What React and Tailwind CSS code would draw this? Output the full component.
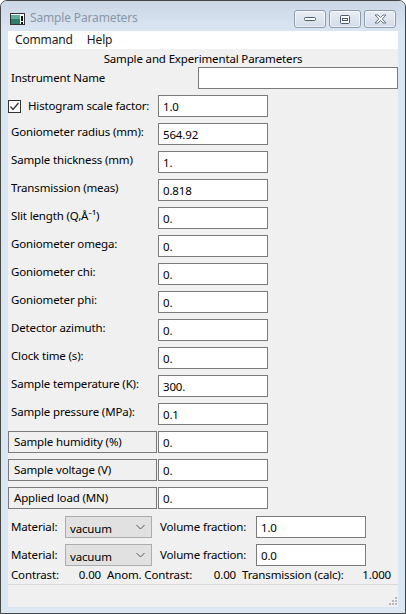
import React from "react";

const simpleRows = [
  ["Goniometer radius (mm):", "564.92"],
  ["Sample thickness (mm)", "1."],
  ["Transmission (meas)", "0.818"],
  ["Slit length (Q,Å⁻¹)", "0."],
  ["Goniometer omega:", "0."],
  ["Goniometer chi:", "0."],
  ["Goniometer phi:", "0."],
  ["Detector azimuth:", "0."],
  ["Clock time (s):", "0."],
  ["Sample temperature (K):", "300."],
  ["Sample pressure (MPa):", "0.1"],
];

const boxedRows = [
  ["Sample humidity (%)", "0."],
  ["Sample voltage (V)", "0."],
  ["Applied load (MN)", "0."],
];

function Field({ value, className = "w-[110px]" }) {
  return (
    <div className={`h-[22px] bg-white border border-[#7a7a7a] flex items-center pl-[4px] ${className}`}>
      <span className="leading-4 pt-[1px]">{value}</span>
    </div>
  );
}

function WinBtn({ children }) {
  return (
    <div className="w-[32px] h-[18px] rounded-[3px] border border-[#8e9cae] bg-gradient-to-b from-[#e9eef5] to-[#d3dce8] flex items-center justify-center shadow-[inset_0_0_0_1px_rgba(255,255,255,0.6)]">
      {children}
    </div>
  );
}

function Select() {
  return (
    <div className="w-[87px] h-[22px] bg-[#e1e1e1] border border-[#adadad] flex items-center justify-between pl-[4px] pr-[6px]">
      <span className="leading-4 pt-[3px]">vacuum</span>
      <svg width="9" height="6" viewBox="0 0 9 6">
        <polyline points="0.5,1 4.5,5 8.5,1" fill="none" stroke="#555" strokeWidth="1" />
      </svg>
    </div>
  );
}

export default function App() {
  return (
    <div
      className="w-[406px] h-[614px] border border-[#474747] rounded-t-[7px] bg-[#dbe6f3] flex flex-col text-[11.5px] tracking-[-0.15px] whitespace-nowrap text-black overflow-hidden"
      style={{ fontFamily: "'Noto Sans', 'Open Sans', sans-serif" }}
    >
      {/* Title bar */}
      <div className="h-[30px] bg-gradient-to-b from-[#cbd7e5] to-[#dbe6f3] flex items-start pl-[9px] pr-[9px]">
        <div className="mt-[12px] w-[15px] h-[12px]">
          <svg width="15" height="12" viewBox="0 0 15 12">
            <rect x="0.5" y="0.5" width="14" height="11" fill="#fff" stroke="#333" />
            <rect x="1" y="2" width="9" height="9" fill="#2e7d6b" />
            <rect x="1" y="2" width="9" height="4" fill="#5fae9a" />
            <rect x="11" y="3" width="2" height="5" fill="#111" />
            <rect x="11" y="9" width="2" height="2" fill="#111" />
          </svg>
        </div>
        <div className="ml-[5px] mt-[9px] text-[#8a97a8] text-[12px] leading-4">Sample Parameters</div>
        <div className="ml-auto mt-[9px] flex gap-[3px]">
          <WinBtn>
            <svg width="12" height="6" viewBox="0 0 12 6">
              <rect x="0.5" y="1.5" width="11" height="3" rx="1" fill="#fff" stroke="#4d5b6e" />
            </svg>
          </WinBtn>
          <WinBtn>
            <svg width="10" height="9" viewBox="0 0 10 9">
              <rect x="0.5" y="0.5" width="9" height="8" rx="1" fill="#fff" stroke="#4d5b6e" />
              <rect x="2.5" y="3.5" width="5" height="2" fill="none" stroke="#4d5b6e" />
            </svg>
          </WinBtn>
          <WinBtn>
            <svg width="13" height="10" viewBox="0 0 13 10">
              <path d="M1,1 L4,1 L6.5,3.5 L9,1 L12,1 L8.2,5 L12,9 L9,9 L6.5,6.5 L4,9 L1,9 L4.8,5 Z" fill="#fff" stroke="#5a6679" strokeWidth="0.9" strokeLinejoin="round" />
            </svg>
          </WinBtn>
        </div>
      </div>

      {/* Menu bar */}
      <div className="mx-[7px] h-[18px] bg-white flex items-center text-[12px]">
        <span className="ml-[7px] leading-4 text-[#1a1a1a]">Command</span>
        <span className="ml-[14px] leading-4 text-[#1a1a1a]">Help</span>
      </div>

      {/* Content */}
      <div className="mx-[7px] flex-1 bg-[#f0f0f0] flex flex-col">
        <div className="mt-[2px] h-[16px] leading-4 text-center">Sample and Experimental Parameters</div>

        <div className="flex flex-col gap-[6px]">
          <div className="flex items-center h-[22px]">
            <div className="w-[190px] pl-[3px] leading-4">Instrument Name</div>
            <Field value="" className="flex-1" />
          </div>

          <div className="flex items-center h-[22px]">
            <div className="w-[150px] flex items-center">
              <svg width="13" height="13" viewBox="0 0 13 13">
                <rect x="0.5" y="0.5" width="12" height="12" fill="#fff" stroke="#333" />
                <polyline points="2.5,6.5 5,9.5 10.5,3" fill="none" stroke="#333" strokeWidth="1.3" />
              </svg>
              <span className="ml-[7px] leading-4">Histogram scale factor:</span>
            </div>
            <Field value="1.0" />
          </div>

          {simpleRows.map(([l, v]) => (
            <div key={l} className="flex items-start h-[22px]">
              <div className="w-[150px] pl-[3px] pt-[1px] leading-4">{l}</div>
              <Field value={v} />
            </div>
          ))}

          {boxedRows.map(([l, v]) => (
            <div key={l} className="flex h-[22px]">
              <div className="w-[149px] mr-[1px] border border-[#7a7a7a] flex items-center pl-[5px] leading-4">
                {l}
              </div>
              <Field value={v} />
            </div>
          ))}
        </div>

        <div className="mt-[7px] flex flex-col gap-[6px]">
          {["1.0", "0.0"].map((v, i) => (
            <div key={i} className="flex items-center h-[22px]">
              <div className="w-[57px] pl-[3px] leading-4">Material:</div>
              <Select />
              <div className="w-[104px] pl-[8px] leading-4">Volume fraction:</div>
              <Field value={v} />
            </div>
          ))}
        </div>

        <div className="mt-[1px] h-[16px] flex items-center leading-4 pl-[3px]">
          <div className="w-[90px] flex justify-between">
            <span>Contrast:</span>
            <span>0.00</span>
          </div>
          <div className="ml-[6px] w-[129px] flex justify-between">
            <span>Anom. Contrast:</span>
            <span>0.00</span>
          </div>
          <div className="ml-[6px] w-[149px] flex justify-between">
            <span>Transmission (calc):</span>
            <span>1.000</span>
          </div>
        </div>

        <div className="mt-auto h-[23px] border-t border-[#d9d9d9] relative">
          <svg className="absolute right-[1px] bottom-[2px]" width="10" height="10" viewBox="0 0 10 10">
            {[[8, 2], [8, 5], [8, 8], [5, 5], [5, 8], [2, 8]].map(([x, y], i) => (
              <rect key={i} x={x} y={y} width="2" height="2" fill="#b8b8b8" />
            ))}
          </svg>
        </div>
      </div>
      <div className="h-[6px]" />
    </div>
  );
}
